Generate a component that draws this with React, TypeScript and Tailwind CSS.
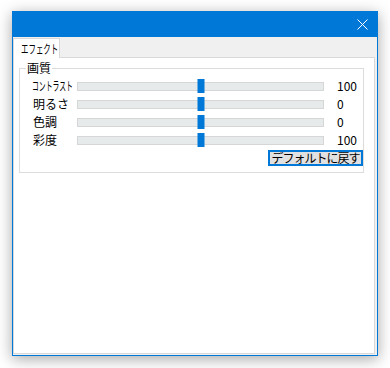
const rows = [
  { label: 'コントラスト', value: '100', narrow: true },
  { label: '明るさ', value: '0', narrow: false },
  { label: '色調', value: '0', narrow: false },
  { label: '彩度', value: '100', narrow: false },
]

function Slider() {
  return (
    <div className="relative flex h-[18px] w-[247px] items-center">
      <div className="h-[9px] w-full border border-[#d6d6d6] bg-[#e7eaea]" />
      <div className="absolute left-1/2 top-[2px] h-[14px] w-[7px] -translate-x-1/2 bg-[#0078d7]" />
    </div>
  )
}

export default function App() {
  return (
    <div
      className="h-[368px] w-[390px] overflow-hidden bg-white pl-[12px] pt-[11px] text-[12px] text-black"
      style={{ fontFamily: '"Noto Sans CJK JP", "Noto Sans", sans-serif' }}
    >
      <div className="flex h-[345px] w-[366px] flex-col border border-[#0078d7] bg-[#f0f0f0] shadow-[0_3px_14px_rgba(0,0,0,0.35)]">
        {/* title bar */}
        <div className="flex h-[25px] shrink-0 items-center justify-end bg-[#0078d7] pr-[9px]">
          <svg width="11" height="11" viewBox="0 0 11 11" className="text-white">
            <path d="M0.5 0.5 L10.5 10.5 M10.5 0.5 L0.5 10.5" stroke="currentColor" strokeWidth="1" fill="none" />
          </svg>
        </div>

        {/* tabs */}
        <div className="flex flex-1 flex-col pb-[1px] pr-[2px]">
          <div className="mt-[1px] flex">
            <div className="relative z-10 -mb-px flex h-[20px] w-[47px] items-center overflow-hidden border border-b-0 border-[#d9d9d9] bg-white pl-[7px] leading-[14px] whitespace-nowrap">
              <span className="inline-block origin-left scale-x-[0.62]">エフェクト</span>
            </div>
          </div>

          <div className="flex-1 border border-[#d9d9d9] bg-white pl-[5px] pr-[10px] pt-[3px]">
            <fieldset className="flex h-[112px] flex-col border border-[#dcdcdc] pl-[12px] pt-[2px]">
              <legend className="-ml-[6px] px-[1px] leading-[14px]">画質</legend>
              {rows.map((r) => (
                <div key={r.label} className="flex h-[18px] items-center leading-[14px]">
                  <span className="w-[45px] whitespace-nowrap">
                    {r.narrow ? (
                      <span className="inline-block origin-left scale-x-[0.57]">{r.label}</span>
                    ) : (
                      <span className="pl-[1px]">{r.label}</span>
                    )}
                  </span>
                  <Slider />
                  <span className="ml-[13px]">{r.value}</span>
                </div>
              ))}
              <button className="mt-[1px] flex h-[16px] w-[95px] items-center justify-center self-end border-2 border-[#0078d7] bg-[#e1e1e1] text-[12px] leading-[12px] whitespace-nowrap tracking-[-1px]">
                デフォルトに戻す
              </button>
            </fieldset>
          </div>
        </div>
      </div>
    </div>
  )
}
